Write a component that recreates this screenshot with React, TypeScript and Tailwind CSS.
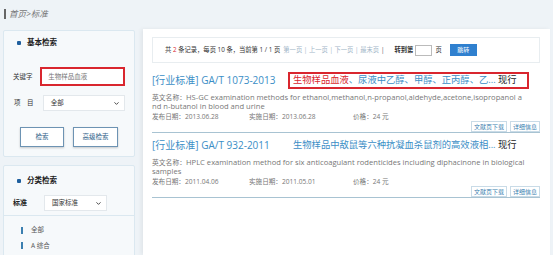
import { ChevronDown } from "lucide-react";

const cjk = { fontFamily: '"Open Sans", "Noto Sans CJK SC", sans-serif' };

function Bullet() {
  return <span className="inline-block w-[4px] h-[4px] bg-[#1f5f9e] rounded-[1px]" />;
}

function Select({ label, w }: { label: string; w: string }) {
  return (
    <div
      className={`${w} h-[16px] flex items-center justify-between pl-[7px] pr-[4px] bg-white border border-[#e3e8ec] text-[6.5px] text-[#333]`}
    >
      <span>{label}</span>
      <ChevronDown size={7} strokeWidth={3} className="text-[#333]" />
    </div>
  );
}

function Item({
  title,
  red,
  rest,
  en,
  pub,
  impl,
}: {
  title: string;
  red: string;
  rest: string;
  en: string;
  pub: string;
  impl: string;
}) {
  return (
    <div className="border-b border-[#a8c3d2]">
      <div className="flex items-center h-[16px]">
        <span className="w-[141px] text-[10px] text-[#3b8ec6] whitespace-nowrap">{title}</span>
        <span className="text-[9.3px] whitespace-nowrap text-[#3b8ec6]">
          <span className="text-[#d9262e]">{red}</span>
          {rest}
          <span className="text-[#222]"> 现行</span>
        </span>
      </div>
      <p className="mt-[5px] pr-[14px] text-[7.6px] leading-[9px] text-[#777] break-all">
        <span className="text-[6.8px]">英文名称：</span>
        {en}
      </p>
      <div className="flex text-[6.6px] text-[#777] h-[21px]">
        <span className="w-[97px] leading-[10px] pt-[1px]">发布日期：{pub}</span>
        <span className="w-[104px] leading-[10px] pt-[1px]">实施日期：{impl}</span>
        <span className="w-[114px] leading-[10px] pt-[1px]">价格：24 元</span>
        <div className="flex gap-[3px] ml-auto self-end">
          <span className="px-[2px] h-[11px] leading-[10px] border border-[#c9dbe7] text-[6px] text-[#3b7fb0] bg-white">
            文献页下载
          </span>
          <span className="px-[2px] h-[11px] leading-[10px] border border-[#c9dbe7] text-[6px] text-[#3b7fb0] bg-white">
            详细信息
          </span>
        </div>
      </div>
    </div>
  );
}

export default function App() {
  return (
    <div className="w-[553px] h-[255px] overflow-hidden bg-[#eef3f7]" style={cjk}>
      <div className="h-[29px] flex items-start pt-[9px] pl-[4px] gap-[3px]">
        <span className="w-[2px] h-[10px] bg-[#666]" />
        <span className="italic text-[8.5px] leading-[10px] text-[#777]">首页&gt;标准</span>
      </div>

      <div className="flex">
        <div className="ml-[3px] w-[132px] flex flex-col gap-[8px] pt-[1px]">
          <div className="h-[127px] bg-[#f6f9fb] border border-[#dbe8f0] rounded-[2px] px-[9px] pt-[6px]">
            <div className="flex items-center gap-[6px] pl-[4px]">
              <Bullet />
              <span className="text-[7.5px] font-bold text-[#222]">基本检索</span>
            </div>
            <div className="flex items-center mt-[19px]">
              <span className="w-[28px] text-[6.5px] text-[#333]">关键字</span>
              <div className="w-[87px] h-[19px] border-2 border-[#d9262e] bg-white flex items-center pl-[6px] text-[6.5px] text-[#777]">
                生物样品血液
              </div>
            </div>
            <div className="flex items-center mt-[9px]">
              <span className="w-[30px] text-[6.5px] text-[#333] pl-[1px]">项　目</span>
              <Select label="全部" w="w-[83px]" />
            </div>
            <div className="flex gap-[9px] mt-[16px] pl-[7px]">
              <button className="w-[44px] h-[20px] bg-white border border-[#6d93b3] shadow-[0_1px_2px_rgba(0,0,0,0.2)] text-[6.5px] text-[#2f5f8a]">
                检索
              </button>
              <button className="w-[45px] h-[20px] bg-white border border-[#6d93b3] shadow-[0_1px_2px_rgba(0,0,0,0.2)] text-[6.5px] text-[#2f5f8a]">
                高级检索
              </button>
            </div>
          </div>

          <div className="h-[100px] bg-[#f6f9fb] border border-[#dbe8f0] rounded-[2px]">
            <div className="px-[9px] pt-[9px] pb-[4px]">
              <div className="flex items-center gap-[6px] pl-[4px]">
                <Bullet />
                <span className="text-[7.5px] font-bold text-[#222]">分类检索</span>
              </div>
              <div className="flex items-center mt-[9px]">
                <span className="w-[31px] text-[7px] font-bold text-[#222]">标准</span>
                <Select label="国家标准" w="w-[63px]" />
              </div>
            </div>
            <div className="border-t border-[#dbe8f0] pt-[9px] pl-[17px] flex flex-col gap-[6px]">
              <div className="flex items-center gap-[8px] text-[6.5px] text-[#555]">
                <span className="w-[2px] h-[7px] bg-[#3b7fb0]" />
                全部
              </div>
              <div className="flex items-center gap-[8px] text-[6.5px] text-[#555]">
                <span className="w-[2px] h-[7px] bg-[#3b7fb0]" />
                A 综合
              </div>
            </div>
          </div>
        </div>

        <div className="ml-[8px] w-[407px] h-[226px] bg-white shadow-[-2px_0_4px_rgba(0,0,0,0.06)] pl-[9px] pr-[10px] pt-[8px]">
          <div className="h-[26px] border border-[#e8edf0] flex items-center pl-[12px] text-[6.3px] text-[#333] whitespace-nowrap">
            <span>
              共 <span className="text-[#d9262e]">2</span> 条记录，每页 10 条，当前第 1 / 1 页
            </span>
            <span className="ml-[3px] text-[#9fb6c8]">第一页 | 上一页 | 下一页 | 最末页</span>
            <span className="ml-[2px] text-[#555]">|</span>
            <span className="ml-[10px] font-bold">转到第</span>
            <span className="ml-[2px] w-[17px] h-[11px] border border-[#bbb] bg-white" />
            <span className="ml-[3px]">页</span>
            <span className="ml-[8px] w-[27px] h-[12px] bg-[#2f80cf] text-white flex items-center justify-center text-[6px]">
              跳转
            </span>
          </div>

          <div className="mt-[9px] flex flex-col gap-[4px]">
            <div className="relative">
              <Item
                title="[行业标准] GA/T 1073-2013"
                red="生物样品血液"
                rest="、尿液中乙醇、甲醇、正丙醇、乙..."
                en="HS-GC examination methods for ethanol,methanol,n-propanol,aldehyde,acetone,isopropanol and n-butanol in blood and urine"
                pub="2013.06.28"
                impl="2013.06.28"
              />
              <div className="absolute left-[136px] top-[0px] w-[241px] h-[17px] border-2 border-[#d9262e]" />
            </div>
            <Item
              title="[行业标准] GA/T 932-2011"
              red=""
              rest="生物样品中敌鼠等六种抗凝血杀鼠剂的高效液相..."
              en="HPLC examination method for six anticoagulant rodenticides including diphacinone in biological samples"
              pub="2011.04.06"
              impl="2011.05.01"
            />
          </div>
        </div>
      </div>
    </div>
  );
}
